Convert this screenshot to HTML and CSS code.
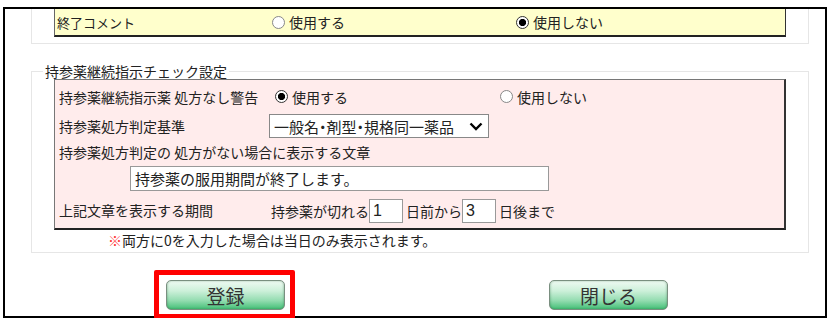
FILE: index.html
```html
<!DOCTYPE html>
<html lang="ja">
<head>
    <meta charset="UTF-8">
    <title>持参薬継続指示チェック設定</title>
    <link rel="stylesheet" href="styles.css">
</head>
<body>
    <div class="window">
        <div class="group-top">
            <div class="row-yellow">
                <span class="label-y">終了コメント</span>
                <label class="radio col-y1"><input type="radio" name="endComment">使用する</label>
                <label class="radio"><input type="radio" name="endComment" checked>使用しない</label>
            </div>
        </div>

        <fieldset class="group">
            <legend>持参薬継続指示チェック設定</legend>
            <div class="pink">
                <div class="prow r1">
                    <span class="col-a">持参薬継続指示薬 処方なし警告</span>
                    <label class="radio col-b"><input type="radio" name="warn" checked>使用する</label>
                    <label class="radio"><input type="radio" name="warn">使用しない</label>
                </div>
                <div class="prow r2">
                    <span class="col-c">持参薬処方判定基準</span>
                    <div class="select-wrap">
                        <select class="select">
                            <option>一般名・剤型・規格同一薬品</option>
                        </select>
                        <svg class="chevron" width="14" height="9" viewBox="0 0 14 9">
                            <path d="M1.5 1.5 L7 7 L12.5 1.5" fill="none" stroke="#000" stroke-width="2.4"/>
                        </svg>
                    </div>
                </div>
                <div class="prow r3">
                    <span>持参薬処方判定の 処方がない場合に表示する文章</span>
                </div>
                <div class="prow r4">
                    <input type="text" class="message" value="持参薬の服用期間が終了します。">
                </div>
                <div class="prow r5">
                    <span class="col-d">上記文章を表示する期間</span>
                    <span class="period">持参薬が切れる<input type="text" class="days" value="1"><span class="after">日前から</span><input type="text" class="days" value="3"><span class="after">日後まで</span></span>
                </div>
            </div>
            <p class="note"><span class="mark">※</span>両方に0を入力した場合は当日のみ表示されます。</p>
        </fieldset>

        <div class="buttons">
            <button class="btn">登録</button>
            <button class="btn btn-close">閉じる</button>
        </div>

        <!-- 注釈の赤枠 -->
        <div class="highlight"></div>
    </div>
</body>
</html>
```

FILE: styles.css
```css
* {
    box-sizing: border-box;
}

body {
    margin: 0;
    padding: 7px 0 0 3px;
    font-family: "Noto Sans CJK JP", sans-serif;
    font-size: 14px;
    color: #222;
    background-color: #fff;
}

.window {
    position: relative;
    width: 824px;
    border: 2px solid #000;
    padding-bottom: 6px;
}

/* 上のグループ (スクロールで上が切れている) */
.group-top {
    margin-left: 26px;
    width: 778px;
    height: 35px;
    border: 1px solid #e6e6e6;
    border-top: none;
    padding: 0 22px;
}

.row-yellow {
    display: flex;
    align-items: center;
    height: 28px;
    padding-left: 2px;
    background-color: #ffffcc;
    border: 1px solid #666;
    border-top: none;
    border-right-color: #333;
    border-bottom: 2px solid #222;
}

.label-y {
    width: 215px;
    font-size: 13px;
}

.col-y1 {
    width: 244px;
}

.radio {
    display: flex;
    align-items: center;
}

.radio input {
    appearance: none;
    width: 13px;
    height: 13px;
    margin: 0 4px 0 0;
    border: 1px solid #888;
    border-radius: 50%;
    background-color: #fff;
}

.radio input:checked {
    border-color: #333;
    background: radial-gradient(circle, #000 0 3.3px, #fff 3.9px);
}

/* 持参薬グループ */
.group {
    margin: 19px 0 0 26px;
    width: 778px;
    min-width: 0;
    border: 1px solid #e6e6e6;
    padding: 0 0 1px;
}

.group legend {
    margin-left: 11px;
    padding: 0 2px;
    line-height: 16px;
}

.pink {
    margin: 0 22px;
    background-color: #ffecec;
    border: 1px solid #777;
    border-right: 2px solid #333;
    border-bottom: 2px solid #222;
    padding-left: 4px;
}

.prow {
    display: flex;
    align-items: center;
}

.r1 { height: 33px; }
.r2 { height: 26px; }
.r3 { height: 26px; }
.r4 { height: 26px; }
.r5 { height: 37px; }

.col-a { width: 216px; }
.col-b { width: 225px; }
.col-c { width: 210px; }
.col-d { width: 212px; }

.select-wrap {
    position: relative;
}

.select {
    appearance: none;
    width: 220px;
    height: 24px;
    padding: 0 0 0 4px;
    border: 1px solid #888;
    background-color: #fff;
    font-family: inherit;
    font-size: 15px;
    font-feature-settings: "palt";
    color: #222;
}

.chevron {
    position: absolute;
    right: 6px;
    top: 8px;
}

.message {
    margin-left: 71px;
    width: 419px;
    height: 25px;
    padding: 0 4px;
    border: 1px solid #999;
    font-family: inherit;
    font-size: 15px;
    color: #222;
}

.period {
    display: flex;
    align-items: center;
    padding-top: 3px;
}

.days {
    width: 34px;
    height: 24px;
    padding: 0 3px;
    border: 1px solid #999;
    font-family: "Liberation Sans", sans-serif;
    font-size: 16px;
    color: #222;
}

.after {
    margin-left: 3px;
}

.note {
    margin: 0;
    padding-left: 76px;
    line-height: 21px;
}

.mark {
    color: #f33;
}

/* ボタン */
.buttons {
    display: flex;
    margin-top: 27px;
    padding-left: 161px;
}

.btn {
    width: 119px;
    height: 30px;
    border: 1px solid #7a8f80;
    border-radius: 5px;
    background: linear-gradient(#eefaf2 0%, #cdf0da 35%, #93dcb0 70%, #45c078 100%);
    box-shadow: inset 1px 0 2px rgba(0, 80, 30, 0.2), inset -1px 0 2px rgba(0, 80, 30, 0.2);
    font-family: inherit;
    font-size: 19px;
    color: #333;
    padding: 0;
    cursor: pointer;
}

.btn-close {
    margin-left: 264px;
}

.highlight {
    position: absolute;
    left: 149px;
    top: 261px;
    width: 141px;
    height: 49px;
    border: 5px solid #f00;
    border-radius: 2px;
    pointer-events: none;
}
```
